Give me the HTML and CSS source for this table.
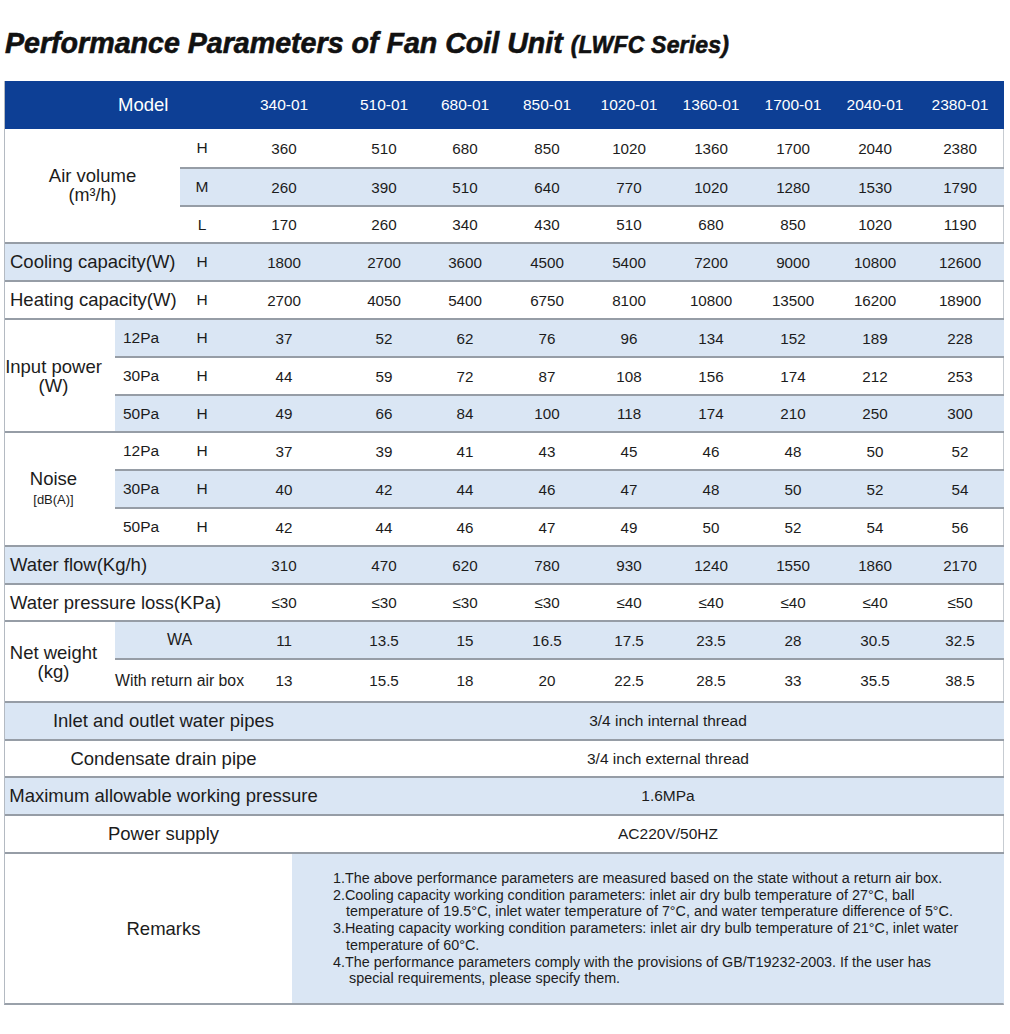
FILE: index.html
```html
<!DOCTYPE html>
<html>
<head>
<meta charset="utf-8">
<title>Performance Parameters of Fan Coil Unit</title>
<link rel="stylesheet" href="styles.css">
</head>
<body>
<div class="page">
  <h1 class="title">Performance Parameters of Fan Coil Unit <span class="sub">(LWFC Series)</span></h1>
  <div class="sheet">
    <table class="spec">
      <colgroup>
        <col class="ca"><col class="cb"><col class="cc"><col class="d1"><col class="d2">
        <col class="dn"><col class="dn"><col class="dn"><col class="dn"><col class="dn"><col class="dn">
        <col class="d9">
      </colgroup>
      <thead>
        <tr>
          <th colspan="3" class="model">Model</th>
          <th>340-01</th><th>510-01</th><th>680-01</th><th>850-01</th><th>1020-01</th><th>1360-01</th><th>1700-01</th><th>2040-01</th><th>2380-01</th>
        </tr>
      </thead>
      <tbody>
        <tr class="tall1">
          <td rowspan="3" colspan="2" class="lab">Air volume<br><span class="unit">(m³/h)</span></td>
          <td class="sp">H</td><td>360</td><td>510</td><td>680</td><td>850</td><td>1020</td><td>1360</td><td>1700</td><td>2040</td><td>2380</td>
        </tr>
        <tr class="z">
          <td class="sp">M</td><td>260</td><td>390</td><td>510</td><td>640</td><td>770</td><td>1020</td><td>1280</td><td>1530</td><td>1790</td>
        </tr>
        <tr class="short">
          <td class="sp">L</td><td>170</td><td>260</td><td>340</td><td>430</td><td>510</td><td>680</td><td>850</td><td>1020</td><td>1190</td>
        </tr>
        <tr class="z">
          <td colspan="2" class="left">Cooling capacity(W)</td>
          <td class="sp">H</td><td>1800</td><td>2700</td><td>3600</td><td>4500</td><td>5400</td><td>7200</td><td>9000</td><td>10800</td><td>12600</td>
        </tr>
        <tr>
          <td colspan="2" class="left">Heating capacity(W)</td>
          <td class="sp">H</td><td>2700</td><td>4050</td><td>5400</td><td>6750</td><td>8100</td><td>10800</td><td>13500</td><td>16200</td><td>18900</td>
        </tr>
        <tr class="z">
          <td rowspan="3" class="lab la white">Input power<br>(W)</td>
          <td class="pa">12Pa</td><td class="sp">H</td><td>37</td><td>52</td><td>62</td><td>76</td><td>96</td><td>134</td><td>152</td><td>189</td><td>228</td>
        </tr>
        <tr>
          <td class="pa">30Pa</td><td class="sp">H</td><td>44</td><td>59</td><td>72</td><td>87</td><td>108</td><td>156</td><td>174</td><td>212</td><td>253</td>
        </tr>
        <tr class="z short">
          <td class="pa">50Pa</td><td class="sp">H</td><td>49</td><td>66</td><td>84</td><td>100</td><td>118</td><td>174</td><td>210</td><td>250</td><td>300</td>
        </tr>
        <tr>
          <td rowspan="3" class="lab la">Noise<br><span class="small">[dB(A)]</span></td>
          <td class="pa">12Pa</td><td class="sp">H</td><td>37</td><td>39</td><td>41</td><td>43</td><td>45</td><td>46</td><td>48</td><td>50</td><td>52</td>
        </tr>
        <tr class="z">
          <td class="pa">30Pa</td><td class="sp">H</td><td>40</td><td>42</td><td>44</td><td>46</td><td>47</td><td>48</td><td>50</td><td>52</td><td>54</td>
        </tr>
        <tr>
          <td class="pa">50Pa</td><td class="sp">H</td><td>42</td><td>44</td><td>46</td><td>47</td><td>49</td><td>50</td><td>52</td><td>54</td><td>56</td>
        </tr>
        <tr class="z">
          <td colspan="3" class="left">Water flow(Kg/h)</td>
          <td>310</td><td>470</td><td>620</td><td>780</td><td>930</td><td>1240</td><td>1550</td><td>1860</td><td>2170</td>
        </tr>
        <tr class="short">
          <td colspan="3" class="left">Water pressure loss(KPa)</td>
          <td>≤30</td><td>≤30</td><td>≤30</td><td>≤30</td><td>≤40</td><td>≤40</td><td>≤40</td><td>≤40</td><td>≤50</td>
        </tr>
        <tr class="z">
          <td rowspan="2" class="lab la white">Net weight<br>(kg)</td>
          <td colspan="2" class="wa">WA</td><td>11</td><td>13.5</td><td>15</td><td>16.5</td><td>17.5</td><td>23.5</td><td>28</td><td>30.5</td><td>32.5</td>
        </tr>
        <tr class="tall">
          <td colspan="2" class="box">With return air box</td><td>13</td><td>15.5</td><td>18</td><td>20</td><td>22.5</td><td>28.5</td><td>33</td><td>35.5</td><td>38.5</td>
        </tr>
      </tbody>
    </table>

    <div class="foot">
      <div class="frow z">
        <div class="flab">Inlet and outlet water pipes</div>
        <div class="fval">3/4 inch internal thread</div>
      </div>
      <div class="frow short">
        <div class="flab">Condensate drain pipe</div>
        <div class="fval">3/4 inch external thread</div>
      </div>
      <div class="frow z">
        <div class="flab">Maximum allowable working pressure</div>
        <div class="fval">1.6MPa</div>
      </div>
      <div class="frow">
        <div class="flab">Power supply</div>
        <div class="fval">AC220V/50HZ</div>
      </div>
      <div class="remarks">
        <div class="rlab">Remarks</div>
        <div class="rtext">
          <p class="item">1.The above performance parameters are measured based on the state without a return air box.</p>
          <p class="item">2.Cooling capacity working condition parameters: inlet air dry bulb temperature of 27°C, ball temperature of 19.5°C, inlet water temperature of 7°C, and water temperature difference of 5°C.</p>
          <p class="item">3.Heating capacity working condition parameters: inlet air dry bulb temperature of 21°C, inlet water temperature of 60°C.</p>
          <p class="item item4">4.The performance parameters comply with the provisions of GB/T19232-2003. If the user has special requirements, please specify them.</p>
        </div>
      </div>
    </div>
  </div>
</div>
</body>
</html>
```

FILE: styles.css
```css
* { box-sizing: border-box; }

html, body {
  margin: 0;
  padding: 0;
  background: #ffffff;
}

body {
  font-family: "Liberation Sans", Arial, sans-serif;
  color: #1c1c1c;
}

.page {
  width: 1010px;
  padding: 27px 6px 0 4px;
}

.title {
  margin: 0 0 20px 1px;
  font-size: 28.6px;
  line-height: 32px;
  font-weight: bold;
  font-style: italic;
  color: #111111;
  white-space: nowrap;
  letter-spacing: 0;
  -webkit-text-stroke: 0.6px #111111;
}

.title .sub {
  font-size: 23px;
  letter-spacing: 0.2px;
}

.sheet {
  width: 1000px;
  border-left: 1px solid #b4bac2;
  border-right: 1px solid #c7ccd2;
  border-bottom: 2px solid #9aa1aa;
}

.spec {
  width: 999px;
  table-layout: fixed;
  border-collapse: collapse;
}

col.ca { width: 110px; }
col.cb { width: 65px; }
col.cc { width: 44px; }
col.d1 { width: 120px; }
col.d2 { width: 80px; }
col.dn { width: 82px; }
col.d9 { width: 88px; }

.spec thead th {
  background: #0d3f95;
  color: #ffffff;
  font-weight: normal;
  font-size: 15.5px;
  height: 48px;
  padding: 0;
  text-align: center;
  border: none;
}

.spec thead th.model {
  text-align: left;
  padding-left: 113px;
  font-size: 18.5px;
}

.spec td {
  height: 38px;
  padding: 0;
  text-align: center;
  vertical-align: middle;
  font-size: 15.2px;
  border-top: 2px solid #969da6;
  white-space: nowrap;
}

.spec tbody tr:first-child td { border-top: none; }

.spec tr.tall1 td { height: 39px; }
.spec tr.short td { height: 37px; }
.spec tr.tall td { height: 42px; }

.z td, .z { background: #dae6f4; }
.z td.white { background: #ffffff; }

.spec td.lab {
  font-size: 18.5px;
  line-height: 19px;
  text-align: center;
}

.spec td.la { padding-right: 13px; }

.spec td.lab .unit { font-size: 18px; }
.spec td.lab .small { font-size: 13px; line-height: 20px; }

.spec td.left {
  text-align: left;
  padding-left: 5px;
  font-size: 18.5px;
}

.spec td.sp { font-size: 15.5px; }

.spec td.pa {
  text-align: left;
  padding-left: 8px;
  font-size: 15.5px;
}

.spec td.wa {
  font-size: 16px;
  padding-left: 20px;
}

.spec td.box {
  text-align: left;
  padding-left: 0;
  font-size: 15.8px;
  overflow: visible;
}

.foot { width: 999px; }

.frow {
  display: grid;
  grid-template-columns: 317px 1fr;
  height: 38px;
  align-items: center;
  border-top: 2px solid #969da6;
}

.frow.short { height: 37px; }

.flab {
  text-align: center;
  font-size: 18.5px;
  white-space: nowrap;
}

.fval {
  text-align: center;
  padding-left: 10px;
  font-size: 15.5px;
}

.remarks {
  display: grid;
  grid-template-columns: 287px 1fr;
  height: 151px;
  border-top: 2px solid #969da6;
}

.rlab {
  display: flex;
  align-items: center;
  justify-content: center;
  padding-left: 30px;
  font-size: 18.5px;
}

.rtext {
  background: #dae6f4;
  display: flex;
  flex-direction: column;
  justify-content: center;
  padding: 0 40px 0 41px;
  font-size: 14.35px;
  line-height: 16.7px;
}

.item {
  margin: 0;
  padding-left: 13px;
  text-indent: -13px;
}

.item4 { padding-left: 16px; text-indent: -16px; }
```
